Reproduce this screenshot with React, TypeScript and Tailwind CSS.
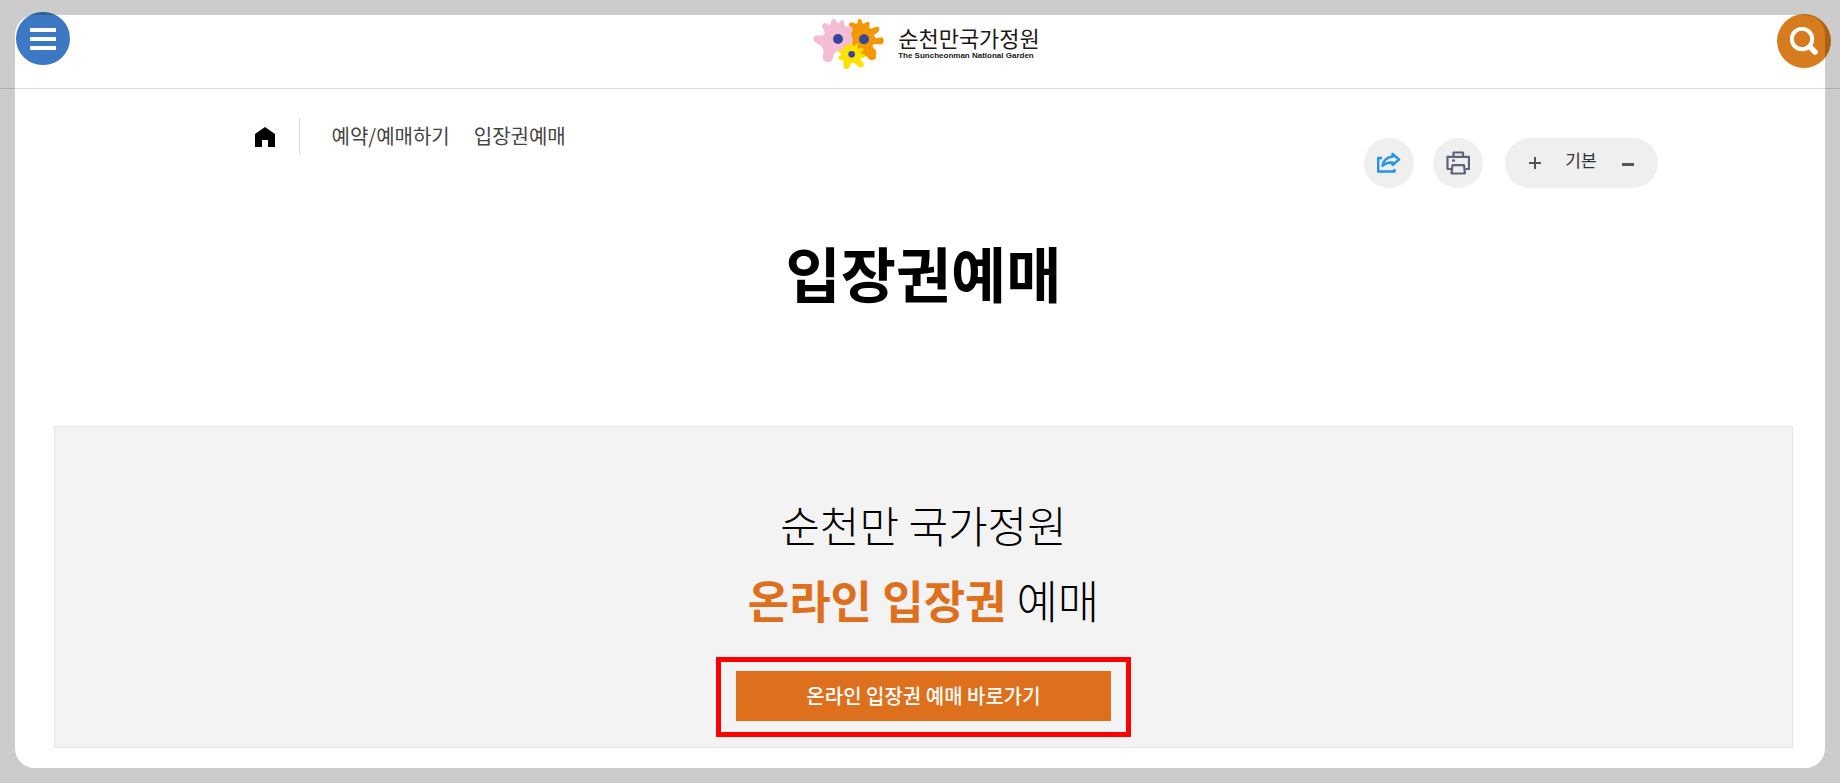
import type { ReactNode } from "react";

const breadcrumbs = ["예약/예매하기", "입장권예매"];

function FlowerMark() {
    return (
        <svg viewBox="39 54 213 153" className="w-[71px] h-[51px]" aria-hidden="true">
            <path
                fill="#f39800"
                d="M145 104C148 97 159 94 157 86C153 80 143 78 148 70C155 63 166 74 172 70C175 66 170 58 179 57C189 57 183 69 190 71C197 72 198 63 206 66C214 71 204 79 209 84C215 90 226 78 235 81C242 88 236 98 227 101C220 104 222 111 228 114C235 117 242 107 249 115C254 124 250 133 241 133C231 132 222 130 218 136C216 142 224 146 228 152C231 161 225 166 228 172C229 180 212 184 206 176C200 168 196 166 186 166L150 150Z"
            />
            <path
                fill="#f5bcd5"
                d="M40 115C42 105 53 104 63 107C73 108 77 98 71 89C65 80 66 70 74 69C82 68 84 77 90 74C94 70 91 58 101 57C110 56 109 69 115 70C120 70 119 60 127 60C136 62 130 73 135 78C141 82 149 76 157 81C163 89 154 94 154 101C154 110 160 114 159 124C152 144 126 150 115 153C106 155 101 160 99 170C98 182 92 187 83 186C70 184 66 176 69 165C72 153 71 146 64 139C56 131 41 130 40 115Z"
            />
            <path
                fill="#ffe100"
                d="M147 136C146 128 157 126 158 134C159 140 164 139 166 134C170 127 178 132 174 139C171 145 176 149 182 144C189 140 193 148 187 153C182 157 182 161 188 162C198 163 199 174 189 174C181 173 178 177 184 182C190 186 196 194 188 200C179 206 172 197 166 191C160 186 153 188 151 195C149 205 142 209 135 206C126 201 132 190 131 184C129 178 122 184 117 177C113 169 121 167 124 163C125 159 112 158 115 150C119 144 127 152 132 148C135 144 129 138 136 134C143 133 142 141 147 136Z"
            />
            <circle cx="114" cy="117" r="15" fill="#36479b" />
            <circle cx="192" cy="118" r="15" fill="#36479b" />
            <circle cx="155" cy="163" r="10" fill="#36479b" />
        </svg>
    );
}

function HomeIcon() {
    return (
        <svg viewBox="0 0 20 20" className="w-5 h-5" aria-hidden="true">
            <path d="M10 0L20 7V20H13V13H7V20H0V7Z" />
        </svg>
    );
}

function ShareIcon() {
    return (
        <svg viewBox="0 0 24 22" className="w-6 h-[22px]" fill="none" stroke="#2494e8" strokeWidth="2.4" strokeLinejoin="round" aria-hidden="true">
            <path d="M5 6H1.200V19.500H17.500V17" />
            <path d="M15.500 2L22 7.500L15.500 13V10.500C11 10.200 8 11.500 5.500 14C5.800 9 10 4.800 15.500 4.800Z" />
        </svg>
    );
}

function PrintIcon() {
    return (
        <svg viewBox="0 0 24 24" className="w-6 h-6" fill="none" stroke="#5c6478" strokeWidth="2.2" strokeLinejoin="round" aria-hidden="true">
            <path d="M7.500 5.500V1.500H17V5.500" />
            <path d="M5 18H1.500V5.800H23V18H19.500" />
            <path d="M6.500 14.200H18L19 22.500H5.500Z" fill="#efefef" />
            <path d="M6 9.500H9" />
        </svg>
    );
}

function RoundButton({ label, children }: { label: string; children: ReactNode }) {
    return (
        <button type="button" aria-label={label} className="flex size-[50px] items-center justify-center rounded-full bg-[#efefef]">
            {children}
        </button>
    );
}

function Header() {
    return (
        <header className="flex h-[89px] items-start justify-between border-b border-[#ddd] pl-4 pr-[9px] pt-3">
            <button type="button" aria-label="전체메뉴" className="flex h-[53px] w-[54px] flex-col items-center justify-center gap-[5px] rounded-full bg-[#3c78c3]">
                <span className="h-1 w-[26px] bg-white" />
                <span className="h-1 w-[26px] bg-white" />
                <span className="h-1 w-[26px] bg-white" />
            </button>

            <a href="#" className="flex items-center gap-[14px] pl-1.5 pt-1.5">
                <FlowerMark />
                <span className="flex flex-col text-[#231815]">
                    <span className="text-[22px] leading-6">순천만국가정원</span>
                    <span className="font-['Liberation_Sans',sans-serif] text-[8px] font-bold leading-[14px]">The Suncheonman National Garden</span>
                </span>
            </a>

            <button type="button" aria-label="검색" className="mt-0.5 flex size-[54px] items-center justify-center rounded-full bg-[#d67b1e]">
                <svg viewBox="0 0 28 28" className="size-7" fill="none" stroke="#fff" aria-hidden="true">
                    <circle cx="12" cy="12" r="10.2" strokeWidth="4" />
                    <path d="M20 20L25 25" strokeWidth="5.5" strokeLinecap="round" />
                </svg>
            </button>
        </header>
    );
}

export default function App() {
    return (
        <div className="min-h-screen bg-white font-['Noto_Sans_CJK_KR',sans-serif] text-black">
            <Header />

            <main className="pb-[27px] pl-[54px] pr-[47px]">
                <div className="mx-auto flex max-w-[1468px] items-start justify-between pl-[65px] pt-[29px]">
                    <nav aria-label="현재 위치" className="flex items-center">
                        <a href="#" aria-label="홈">
                            <HomeIcon />
                        </a>
                        <ol className="ml-6 flex h-[37px] items-center gap-6 border-l border-[#ddd] pb-0.5 pl-8 text-xl text-[#444]">
                            {breadcrumbs.map((item) => (
                                <li key={item}>
                                    <a href="#">{item}</a>
                                </li>
                            ))}
                        </ol>
                    </nav>

                    <div className="flex items-center pt-5">
                        <RoundButton label="공유하기">
                            <ShareIcon />
                        </RoundButton>
                        <div className="ml-[19px] mr-[22px]">
                            <RoundButton label="인쇄하기">
                                <PrintIcon />
                            </RoundButton>
                        </div>
                        <div className="flex h-[50px] w-[153px] items-center justify-between rounded-full bg-[#efefef] px-6 text-[#555]">
                            <button type="button" aria-label="글자 크게">
                                <svg viewBox="0 0 12 12" className="size-3" stroke="currentColor" strokeWidth="2" aria-hidden="true">
                                    <path d="M6 0V12M0 6H12" />
                                </svg>
                            </button>
                            <button type="button" className="pb-1.5 text-[17px] leading-6 text-[#333]">기본</button>
                            <button type="button" aria-label="글자 작게">
                                <svg viewBox="0 0 12 12" className="size-3" stroke="currentColor" strokeWidth="3" aria-hidden="true">
                                    <path d="M0 7.500H12" />
                                </svg>
                            </button>
                        </div>
                    </div>
                </div>

                <h1 className="mt-10 text-center text-[60px] font-bold leading-[88px]">입장권예매</h1>

                <section className="mt-[110px] flex flex-col items-center border border-[#e5e5e5] bg-[#f3f3f3] pb-[26px] pt-[60px] text-center">
                    <h2 className="font-light leading-[75px]">
                        <span className="block text-[43px]">순천만 국가정원</span>
                        <span className="block text-[45px]">
                            <strong className="font-bold text-[#de6f1c]">온라인 입장권</strong> 예매
                        </span>
                    </h2>
                    <div className="relative mt-[34px]">
                        <a href="#" className="flex h-[50px] w-[375px] items-center justify-center bg-[#de6f1c] text-xl font-medium text-white">
                            온라인 입장권 예매 바로가기
                        </a>
                        <div className="pointer-events-none absolute -inset-x-5 -bottom-4 -top-[14px] border-[5px] border-[#ff0000]" />
                    </div>
                </section>
            </main>

            {/* dims everything outside the rounded frame */}
            <div className="pointer-events-none fixed inset-[15px] rounded-[20px] shadow-[0_0_0_100px_rgba(0,0,0,0.2)]" />
        </div>
    );
}
